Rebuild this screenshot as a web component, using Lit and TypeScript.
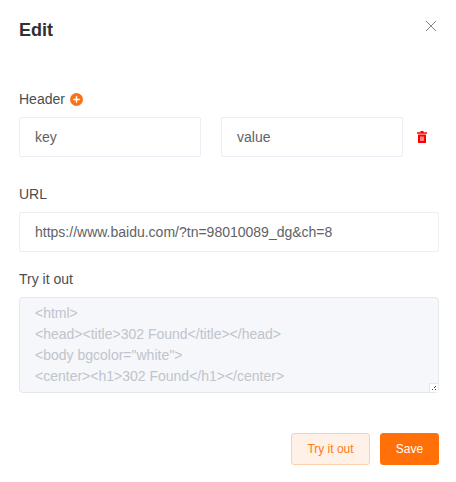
import { LitElement, html, css } from "lit";
import { customElement } from "lit/decorators.js";

const BODY = `<html>
<head><title>302 Found</title></head>
<body bgcolor="white">
<center><h1>302 Found</h1></center>`;

@customElement("app-root")
export class AppRoot extends LitElement {
  static styles = css`
    :host { display: block; width: 456px; height: 482px; background: #fff; font-family: "Liberation Sans", Arial, sans-serif; color: #333; overflow: hidden; }
    * { box-sizing: border-box; }
    .dialog { display: flex; flex-direction: column; padding: 20px 17px 0 19px; }
    .head { display: flex; justify-content: space-between; align-items: flex-start; height: 52px; }
    h2 { margin: 0; font-size: 18px; line-height: 20px; font-weight: 700; color: #303133; }
    .close { width: 12px; height: 12px; margin: 0 2px 0 0; color: #80848e; display: block; }
    .label { font-size: 14px; line-height: 18px; height: 18px; color: #4b4d52; display: flex; align-items: center; gap: 5px; }
    .head + .label { margin-top: 18px; }
    .plus { display: block; width: 13px; height: 13px; }
    .row { display: flex; align-items: center; margin-top: 9px; }
    input { display: block; height: 40px; border: 1px solid #ebeef5; border-radius: 2px; background: #fff; padding: 0 15px; font: 14px "Liberation Sans", Arial, sans-serif; color: #606266; outline: none; }
    .kv { width: 182px; }
    .kv + .kv { margin-left: 20px; }
    .trash { display: block; width: 10px; height: 12px; margin-left: 14px; }
    .url { width: 420px; margin-top: 9px; }
    .sec-url { margin-top: 28px; }
    .sec-try { margin-top: 18px; }
    .area-wrap { position: relative; width: 420px; height: 96px; margin-top: 9px; }
    textarea { display: block; width: 100%; height: 100%; resize: none; overflow: hidden; background: #f5f7fa; border: 1px solid #e4e7ed; border-radius: 4px; padding: 5px 15px; font: 14px/21px "Liberation Sans", Arial, sans-serif; color: #c0c4cc; -webkit-text-fill-color: #c0c4cc; opacity: 1; outline: none; }
    .grip { position: absolute; right: 1px; bottom: 1px; width: 9px; height: 9px; background: #fff; border-left: 1px solid #e4e7ed; border-top: 1px solid #e4e7ed; display: block; }
    .grip svg { display: block; width: 8px; height: 8px; }
    .actions { display: flex; justify-content: flex-end; gap: 10px; margin-top: 40px; }
    button { height: 32px; border-radius: 3px; font: 12px "Liberation Sans", Arial, sans-serif; padding: 0; cursor: pointer; }
    .ghost { width: 79px; background: #fff1e8; border: 1px solid #ffd0ad; color: #ff7a1a; }
    .primary { width: 59px; background: #ff7008; border: 1px solid #ff7008; color: #fff; }
  `;

  render() {
    return html`
      <div class="dialog">
        <div class="head">
          <h2>Edit</h2>
          <svg class="close" viewBox="0 0 12 12" fill="none" stroke="currentColor" stroke-width="1"><path d="M1 1l10 10M11 1L1 11"/></svg>
        </div>
        <div class="label">Header
          <svg class="plus" viewBox="0 0 12 12"><circle cx="6" cy="6" r="6" fill="#f97316"/><path d="M3 6h6M6 3v6" stroke="#fff" stroke-width="1.3"/></svg>
        </div>
        <div class="row">
          <input class="kv" value="key" />
          <input class="kv" value="value" />
          <svg class="trash" viewBox="0 0 10 12"><path fill="#f00" fill-rule="evenodd" d="M3.500 0h3v1.200H10v1.600H0V1.200h3.500zM1 3.500h8V12H1zM3.500 5.500v4.500h1V5.500zM5.500 5.500v4.500h1V5.500z"/></svg>
        </div>
        <div class="label sec-url">URL</div>
        <input class="url" value="https://www.baidu.com/?tn=98010089_dg&ch=8" />
        <div class="label sec-try">Try it out</div>
        <div class="area-wrap">
          <textarea disabled .value=${BODY}></textarea>
          <span class="grip"><svg viewBox="0 0 8 8"><path d="M5.500 2.500v0M4.500 3.500v0M2.500 5.500v0M5.500 5.500v0" stroke="#444" stroke-width="1" stroke-linecap="square"/></svg></span>
        </div>
        <div class="actions">
          <button class="ghost">Try it out</button>
          <button class="primary">Save</button>
        </div>
      </div>
    `;
  }
}
